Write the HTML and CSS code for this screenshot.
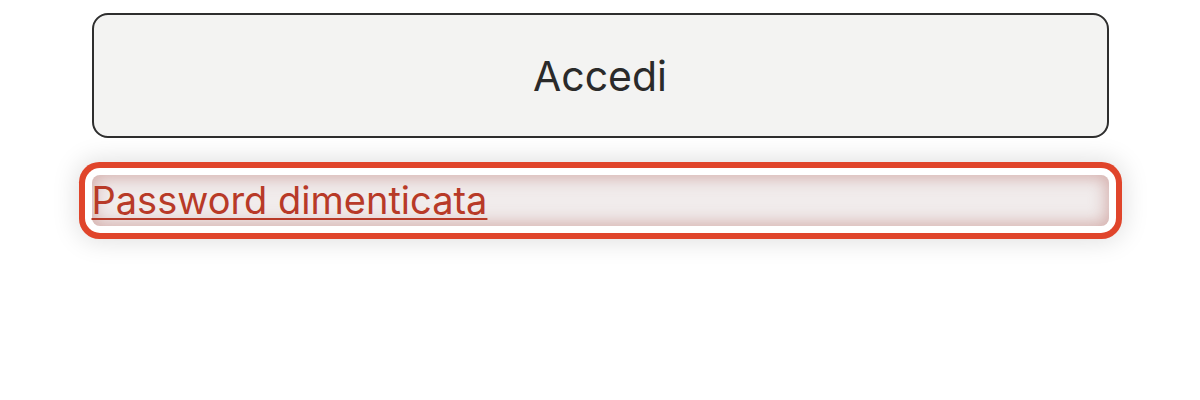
FILE: index.html
```
<!DOCTYPE html>
<html lang="it">
<head>
<meta charset="utf-8">
<link rel="stylesheet" href="styles.css">
</head>
<body>
<div class="wrap">
  <button class="btn" type="button">Accedi</button>
  <a class="forgot" href="#">Password dimenticata</a>
</div>
</body>
</html>
```
FILE: styles.css
```
html, body {
  margin: 0;
  padding: 0;
  background: #ffffff;
}
body {
  font-family: Inter, "Noto Sans", sans-serif;
  min-height: 400px;
}
.wrap {
  width: 1017px;
  margin: 0 auto;
  padding: 13px 0 100px;
  display: flex;
  flex-direction: column;
  gap: 37px;
}
.btn {
  display: block;
  width: 100%;
  height: 125px;
  box-sizing: border-box;
  border: 2px solid #2e2e2e;
  border-radius: 16px;
  background: #f3f3f2;
  color: #2a2a2a;
  font-family: Inter, "Noto Sans", sans-serif;
  font-size: 41px;
  font-weight: 400;
  padding: 0;
}
.forgot {
  display: block;
  height: 51px;
  line-height: 51px;
  border-radius: 8px;
  color: #b83a28;
  font-size: 38px;
  text-decoration: underline;
  text-decoration-thickness: 2px;
  text-underline-offset: 4px;
  background: #f1ecec;
  box-shadow:
    inset 0 0 16px 3px rgba(185, 115, 110, 0.5),
    0 0 0 7px #ffffff,
    0 0 0 13px #e0452b,
    0 0 26px 15px rgba(0, 0, 0, 0.13);
}
```
